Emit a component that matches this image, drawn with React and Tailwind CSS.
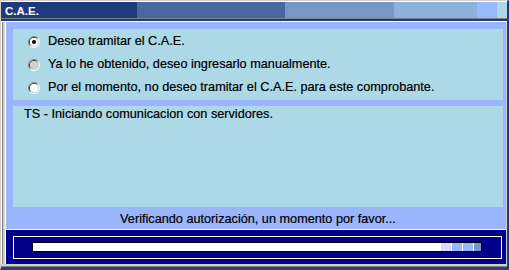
import React from "react";

function Radio({ checked, disabled }) {
  return (
    <svg width="12" height="12" viewBox="0 0 12 12" className="block shrink-0">
      <path d="M2.11 9.89A5.5 5.5 0 0 1 9.89 2.11" fill="none" stroke="#808080" />
      <path d="M9.89 2.11A5.5 5.5 0 0 1 2.11 9.89" fill="none" stroke="#ffffff" />
      <path d="M2.82 9.18A4.5 4.5 0 0 1 9.18 2.82" fill="none" stroke="#404040" />
      <path d="M9.18 2.82A4.5 4.5 0 0 1 2.82 9.18" fill="none" stroke="#d4d0c8" />
      <circle cx="6" cy="6" r="4" fill={disabled ? "#d4d0c8" : "#ffffff"} />
      {checked && <circle cx="6" cy="6" r="2" fill="#000000" />}
    </svg>
  );
}

function Option({ checked, disabled, children }) {
  return (
    <div className="h-[23px] flex items-center pl-[15px]">
      <Radio checked={checked} disabled={disabled} />
      <span className="ml-[8px] leading-[15px] whitespace-nowrap">{children}</span>
    </div>
  );
}

export default function App() {
  return (
    <div
      className="w-[509px] h-[270px] bg-[#d4d0c8] border-l border-t border-l-[#d4d0c8] border-t-[#d4d0c8] border-r-2 border-b-2 border-r-[#1e3a78] border-b-[#2a3f6e] flex flex-col text-black text-[12.7px] [-webkit-text-stroke:0.2px_#000]"
      style={{ fontFamily: '"Liberation Sans", Arial, sans-serif' }}
    >
      {/* title */}
      <div className="border-t border-white">
        <div className="relative h-[16px] flex">
          <div className="w-[136px] bg-[#1f3b7b]" />
          <div className="w-[148px] bg-[#4a67a0]" />
          <div className="w-[109px] bg-[#7896c6]" />
          <div className="w-[83px] bg-[#90b0dc]" />
          <div className="w-[20px] bg-[#98b8ff]" />
          <div className="flex-1 bg-[#add8e6]" />
          <span className="absolute left-[4px] top-0 pt-[1px] leading-[16px] text-[11.5px] font-bold text-white [-webkit-text-stroke:0px]">
            C.A.E.
          </span>
        </div>
      </div>
      <div className="h-px bg-[#808080]" />
      <div className="h-[2px] bg-[#1f3b7b]" />
      <div className="h-px bg-white" />

      {/* main */}
      <div className="h-[242px] flex">
        <div className="w-px bg-white" />
        <div className="w-px bg-[#808080]" />
        <div className="w-[2px] bg-[#d4d0c8]" />
        <div className="w-px bg-white" />
        <div className="w-[500px] flex flex-col">
          <div className="h-[207px] bg-[#98b5fd] pl-[7px] pr-[3px] pt-[7px] flex flex-col">
            <div className="h-[71px] bg-[#add8e6] pt-[1px] flex flex-col">
              <Option checked>Deseo tramitar el C.A.E.</Option>
              <Option disabled>Ya lo he obtenido, deseo ingresarlo manualmente.</Option>
              <Option>Por el momento, no deseo tramitar el C.A.E. para este comprobante.</Option>
            </div>
            <div className="h-[6px]" />
            <div className="h-[101px] bg-[#add8e6] pl-[11px] pt-[1px]">
              <div className="leading-[15px]">TS - Iniciando comunicacion con servidores.</div>
            </div>
            <div className="h-[22px] flex justify-center pt-[5px]">
              <span className="leading-[15px]">Verificando autorización, un momento por favor...</span>
            </div>
          </div>
          <div className="h-px bg-white" />
          <div className="h-[34px] bg-[#00008b] pl-[7px] pt-[6px]">
            <div className="w-[489px] h-[23px] border border-white pl-[18px] pt-[5px]">
              <div className="w-[450px] h-[10px] border border-black flex">
                <div className="w-[408px] bg-white" />
                <div className="w-[10px] bg-[#dcdcfc]" />
                <div className="w-px bg-white" />
                <div className="w-[10px] bg-[#98b8fc]" />
                <div className="w-px bg-white" />
                <div className="w-[10px] bg-[#98b8fc]" />
                <div className="w-px bg-white" />
                <div className="w-[7px] bg-[#7896c6]" />
              </div>
            </div>
          </div>
        </div>
        <div className="w-px bg-[#d4d0c8]" />
      </div>
      <div className="h-[2px] bg-[#d4d0c8]" />
      <div className="h-px bg-[#808080]" />
      <div className="h-px bg-[#404040]" />
    </div>
  );
}
